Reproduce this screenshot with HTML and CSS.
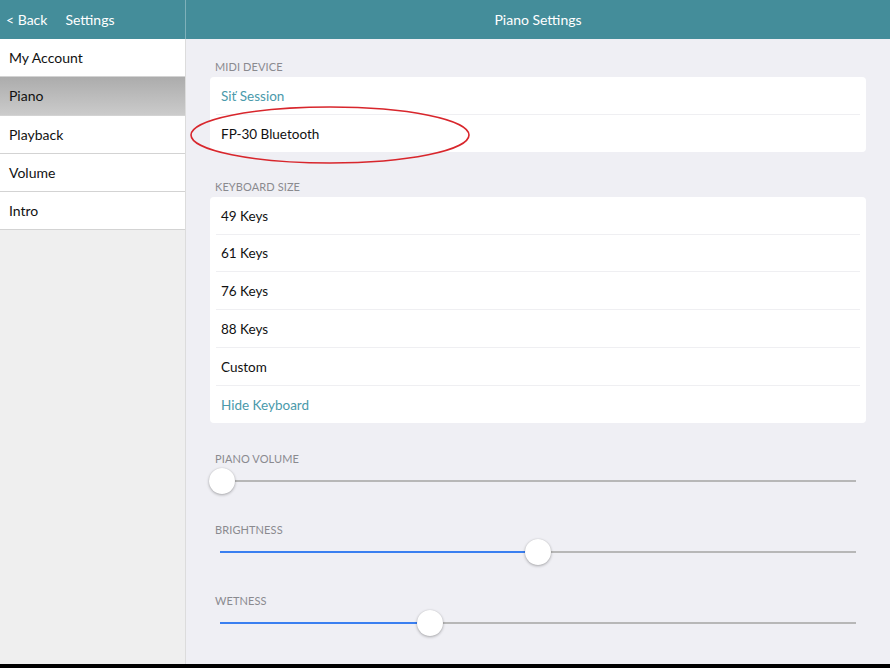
FILE: index.html
```html
<!DOCTYPE html>
<html>
<head>
<meta charset="utf-8">
<link rel="stylesheet" href="styles.css">
</head>
<body>
<div class="app">
  <aside class="sidebar">
    <div class="side-header">
      <span class="back">&lt; Back</span>
      <span class="side-title">Settings</span>
    </div>
    <ul class="side-list">
      <li class="side-item">My Account</li>
      <li class="side-item active">Piano</li>
      <li class="side-item">Playback</li>
      <li class="side-item">Volume</li>
      <li class="side-item">Intro</li>
    </ul>
  </aside>
  <main class="main">
    <div class="main-header">Piano Settings</div>
    <div class="content">
      <section class="section first">
        <div class="label">MIDI DEVICE</div>
        <div class="card">
          <div class="row link">Siť Session</div>
          <div class="row">FP-30 Bluetooth</div>
        </div>
      </section>
      <section class="section">
        <div class="label">KEYBOARD SIZE</div>
        <div class="card">
          <div class="row">49 Keys</div>
          <div class="row">61 Keys</div>
          <div class="row">76 Keys</div>
          <div class="row">88 Keys</div>
          <div class="row">Custom</div>
          <div class="row link">Hide Keyboard</div>
        </div>
      </section>
      <section class="slider-section first-slider">
        <div class="label">PIANO VOLUME</div>
        <div class="slider">
          <div class="track"><div class="fill" style="width:0%"></div><div class="thumb start" style="left:0%"></div></div>
        </div>
      </section>
      <section class="slider-section">
        <div class="label">BRIGHTNESS</div>
        <div class="slider">
          <div class="track"><div class="fill" style="width:50%"></div><div class="thumb" style="left:50%"></div></div>
        </div>
      </section>
      <section class="slider-section">
        <div class="label">WETNESS</div>
        <div class="slider">
          <div class="track"><div class="fill" style="width:33%"></div><div class="thumb" style="left:33%"></div></div>
        </div>
      </section>
    </div>
    <svg class="circle-mark" width="290" height="66" viewBox="0 0 290 66">
      <ellipse cx="145" cy="33" rx="139" ry="28" fill="none" stroke="#d8262c" stroke-width="1.6"/>
    </svg>
  </main>
</div>
<div class="bottom-bar"></div>
</body>
</html>
```
FILE: styles.css
```css
* { box-sizing: border-box; }
html, body { margin: 0; padding: 0; }
body {
  width: 890px;
  height: 668px;
  overflow: hidden;
  font-family: Lato, "Open Sans", sans-serif;
  background: #efeff4;
  display: flex;
  flex-direction: column;
}
.app {
  display: flex;
  height: 664px;
}
.bottom-bar {
  height: 4px;
  background: #000;
}
.sidebar {
  width: 186px;
  background: #efefef;
  border-right: 1px solid #dcdcdc;
  display: flex;
  flex-direction: column;
}
.side-header {
  height: 39px;
  background: #448d9a;
  border-right: 1px solid #7fb1ba;
  margin-right: -1px;
  display: flex;
  align-items: center;
  color: #fff;
  font-size: 14px;
  padding-left: 6px;
}
.back { margin-right: 18px; }
.side-list {
  list-style: none;
  margin: 0;
  padding: 0;
}
.side-item {
  height: 38.25px;
  border-bottom: 1px solid #d3d3d3;
  background: #fff;
  color: #111;
  font-size: 14px;
  padding-left: 9px;
  display: flex;
  align-items: center;
}
.side-item.active {
  background: linear-gradient(#acacac, #cbcbcb);
}
.main {
  flex: 1;
  position: relative;
}
.main-header {
  height: 39px;
  background: #448d9a;
  color: #fff;
  font-size: 14px;
  display: flex;
  align-items: center;
  justify-content: center;
}
.content {
  padding: 20px 24px 0 24px;
}
.section { margin-top: 27px; }
.section.first { margin-top: 0; }
.label {
  font-size: 11px;
  color: #8a8a8f;
  line-height: 16px;
  padding-left: 5px;
  margin-bottom: 2px;
  letter-spacing: 0.1px;
}
.card {
  background: #fff;
  border-radius: 4px;
  padding: 0 6px;
}
.row {
  height: 37.8px;
  border-bottom: 1px solid #efeff2;
  display: flex;
  align-items: center;
  padding-left: 5px;
  padding-top: 1px;
  font-size: 13.5px;
  color: #111;
}
.row:last-child { border-bottom: none; height: 37px; }
.row.link { color: #4a9aab; }
.slider-section { margin-top: 21px; }
.slider-section.first-slider { margin-top: 28px; }
.slider {
  padding: 3px 10px 0 10px;
  height: 32px;
}
.track {
  position: relative;
  height: 2px;
  background: #b7b7b7;
  margin-top: 8px;
}
.fill {
  height: 2px;
  background: #3a7ff0;
}
.thumb {
  position: absolute;
  top: -12px;
  width: 26px;
  height: 26px;
  margin-left: -13px;
  border-radius: 50%;
  background: #fff;
  box-shadow: 0 1px 3px rgba(0,0,0,0.3), 0 0 1px rgba(0,0,0,0.15);
}
.thumb.start { margin-left: -11px; }
.circle-mark {
  position: absolute;
  left: -1px;
  top: 102px;
}
```
